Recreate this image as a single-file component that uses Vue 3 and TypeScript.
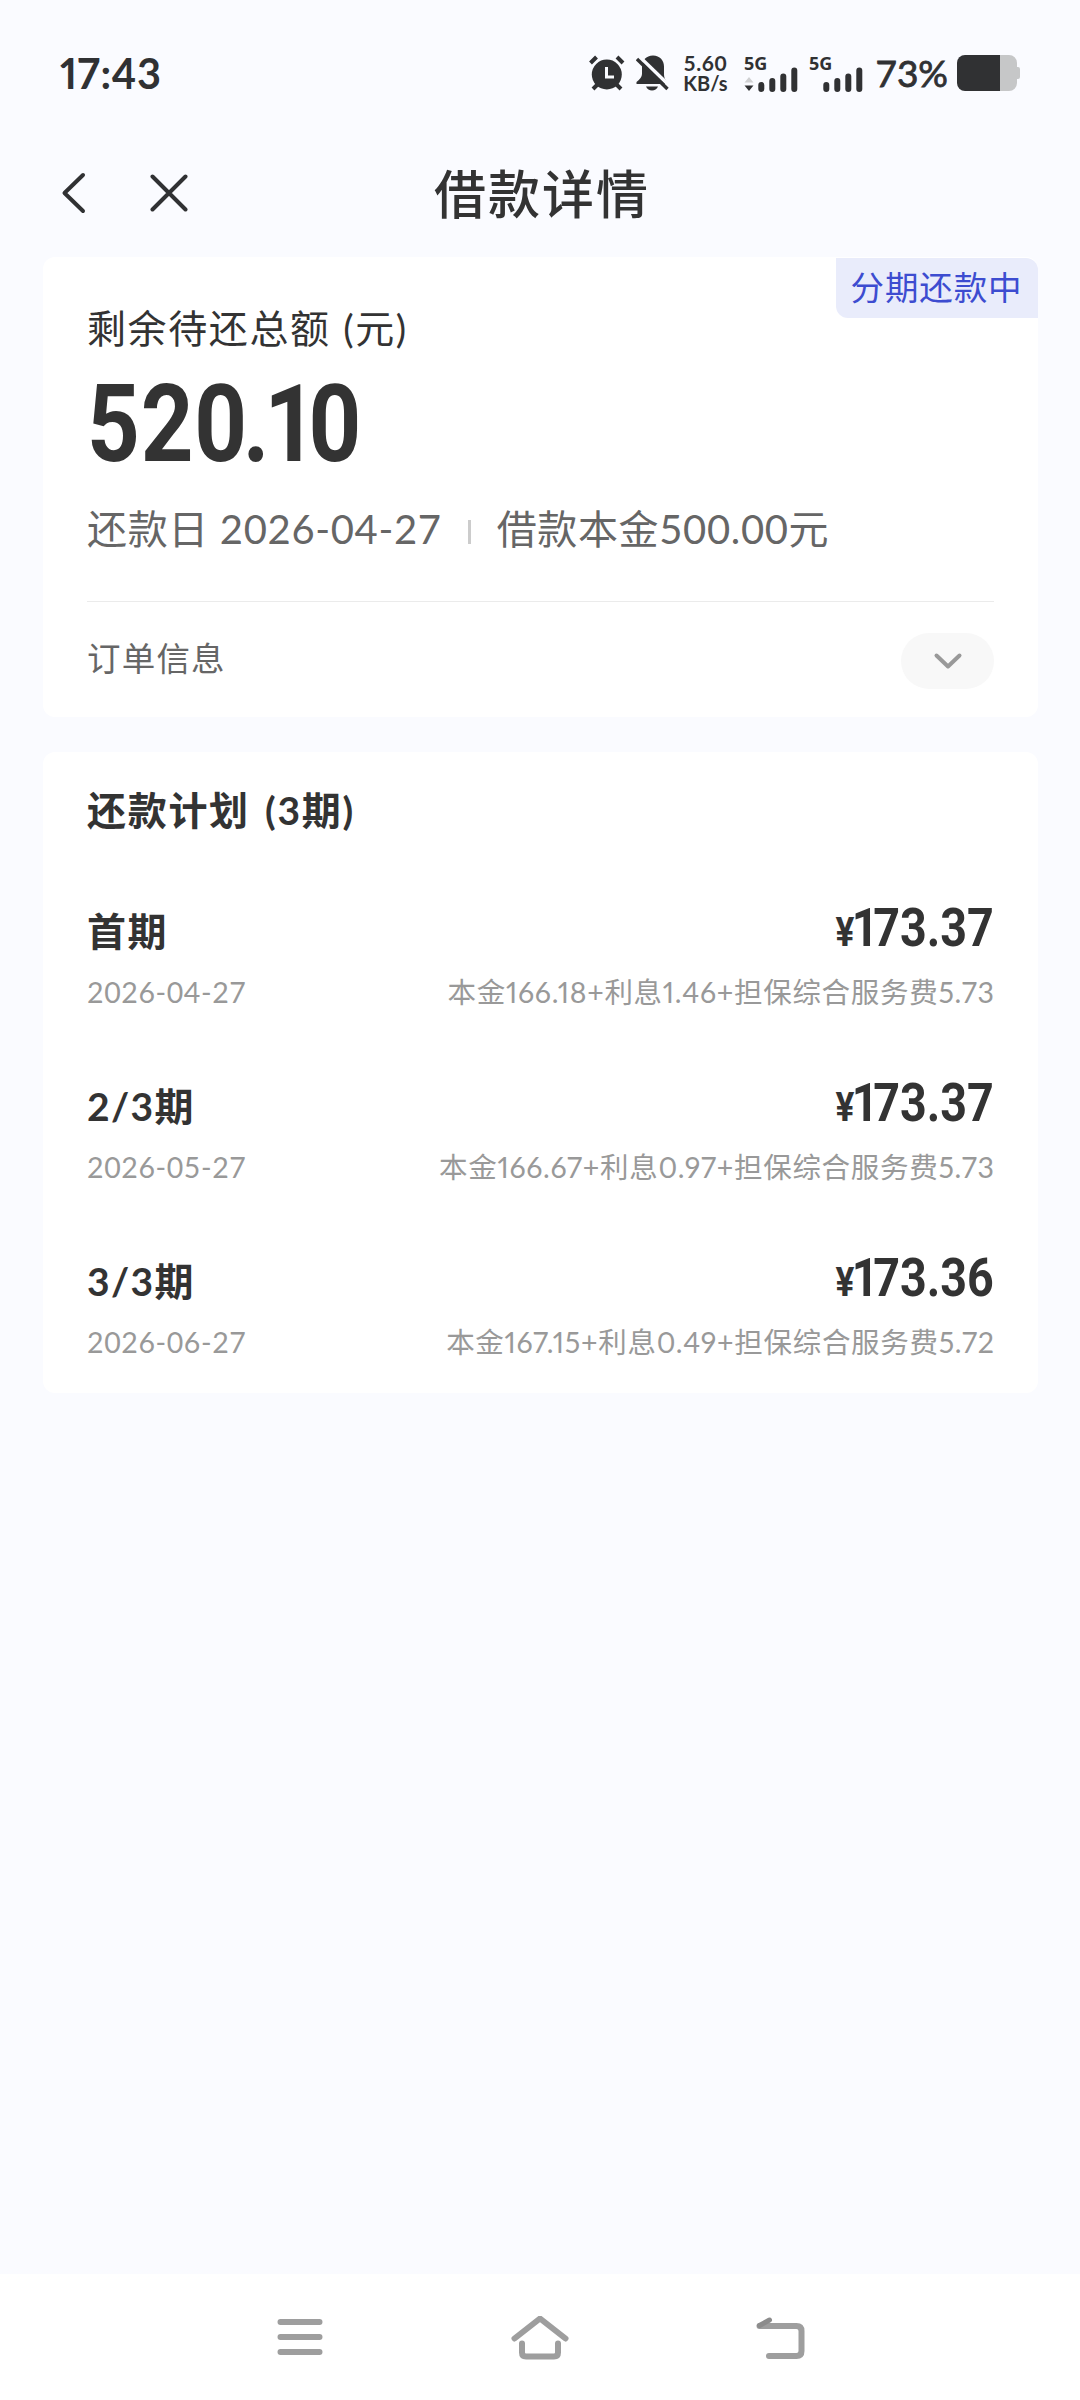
<script setup lang="ts">
interface Installment {
  name: string
  date: string
  amount: string
  detail: string
}

const installments: Installment[] = [
  { name: '首期', date: '2026-04-27', amount: '173.37', detail: '本金166.18+利息1.46+担保综合服务费5.73' },
  { name: '2/3期', date: '2026-05-27', amount: '173.37', detail: '本金166.67+利息0.97+担保综合服务费5.73' },
  { name: '3/3期', date: '2026-06-27', amount: '173.36', detail: '本金167.15+利息0.49+担保综合服务费5.72' },
]
</script>

<template>
  <div class="screen">
    <header class="status">
      <span class="time">17:43</span>
      <div class="status-right">
        <svg width="36" height="38" viewBox="0 0 36 38">
          <path d="M1.500 9 7.500 3M34 9 28 3M9 30 4 35M27 30 32 35" fill="none" stroke="#303133" stroke-width="4" />
          <circle cx="17.800" cy="20.500" r="15" fill="#303133" />
          <path d="M17.500 13v10h7.500" fill="none" stroke="#fafbff" stroke-width="3" />
        </svg>
        <svg class="bell" width="34" height="38" viewBox="0 0 34 38">
          <path d="M17 1.500c7 0 11 5 11 11v8c0 3 1 5 3 7.500v2H.500V28C4 25 6 23 6 20v-7.500c0-6 4-11 11-11z" fill="#303133" />
          <path d="M10 32.500h12c-1 2.700-3.500 4-6 4s-5-1.300-6-4z" fill="#303133" />
          <path d="M3 2.200 35 33.200" stroke="#fafbff" stroke-width="3.500" />
          <path d="M1 5 31.500 35" stroke="#303133" stroke-width="3.400" />
        </svg>
        <div class="speed"><span class="rate">5.60</span><span>KB/s</span></div>
        <svg class="sig" width="55" height="50" viewBox="0 -6 55 50">
          <text x="0" y="16" class="g5">5G</text>
          <path d="M.500 28.500 5 23l4.500 5.500z" fill="#cfd0d2" />
          <path d="M.500 31.500 5 37l4.500-5.500z" fill="#303133" />
          <path d="M17.300 31v4M28.300 27v8M39.300 22.500v12.500M50.300 16.500v18.500" stroke="#303133" stroke-width="6" stroke-linecap="round" />
        </svg>
        <svg class="sig2" width="55" height="50" viewBox="0 -6 55 50">
          <text x="0" y="16" class="g5">5G</text>
          <path d="M17.300 31v4M28.300 27v8M39.300 22.500v12.500M50.300 16.500v18.500" stroke="#303133" stroke-width="6" stroke-linecap="round" />
        </svg>
        <span class="pct">73%</span>
        <svg class="battery" width="63" height="36" viewBox="0 0 63 36">
          <path d="M43 0h9a8 8 0 0 1 8 8v4h1a2 2 0 0 1 2 2v8a2 2 0 0 1-2 2h-1v4a8 8 0 0 1-8 8h-9z" fill="#c6c7c8" />
          <path d="M8 0h35v36H8a8 8 0 0 1-8-8V8a8 8 0 0 1 8-8z" fill="#303133" />
        </svg>
      </div>
    </header>

    <nav class="navbar">
      <div class="nav-side">
        <svg width="26" height="42" viewBox="0 0 26 42"><path d="M23 3 4.500 21 23 39" fill="none" stroke="#303133" stroke-width="4" stroke-linecap="round" stroke-linejoin="round" /></svg>
        <svg class="close" width="38" height="38" viewBox="0 0 38 38"><path d="M2.500 2.500 35.500 35.500M35.500 2.500 2.500 35.500" fill="none" stroke="#303133" stroke-width="4" stroke-linecap="round" /></svg>
      </div>
      <h1 class="title">借款详情</h1>
      <div class="nav-side"></div>
    </nav>

    <section class="card summary">
      <span class="badge">分期还款中</span>
      <div class="label">剩余待还总额 (元)</div>
      <div class="total">52<i class="k5">0</i><i class="k6">.</i><i class="k10">1</i>0</div>
      <div class="meta">
        <span>还款日 2026-04-27</span>
        <i class="sep"></i>
        <span>借款本金500.00元</span>
      </div>
      <div class="order">
        <span class="order-text">订单信息</span>
        <span class="pill">
          <svg width="30" height="18" viewBox="0 0 30 18"><path d="M3.500 3.500 15 14.500 26.500 3.500" fill="none" stroke="#999" stroke-width="4" stroke-linecap="round" stroke-linejoin="round" /></svg>
        </span>
      </div>
    </section>

    <section class="card plan">
      <h2 class="plan-title">还款计划 (3期)</h2>
      <div v-for="item in installments" :key="item.date" class="row">
        <div class="line top">
          <span class="name">{{ item.name }}</span>
          <span class="amount"><i class="yen">¥</i><i class="lead">{{ item.amount.slice(0, 1) }}</i>{{ item.amount.slice(1) }}</span>
        </div>
        <div class="line sub">
          <span class="date">{{ item.date }}</span>
          <span class="detail">{{ item.detail }}</span>
        </div>
      </div>
    </section>

    <footer class="sysnav">
      <svg width="46" height="44" viewBox="0 0 46 44"><path d="M3.500 6h39M3.500 21h39M3.500 36h39" stroke="#9e9e9e" stroke-width="6" stroke-linecap="round" /></svg>
      <svg width="58" height="44" viewBox="0 0 58 44"><path d="M3.500 22.500 29 2.500 54.500 22.500M11 27.500v9q0 4 4 4h28q4 0 4-4v-9" fill="none" stroke="#9e9e9e" stroke-width="6" stroke-linecap="round" stroke-linejoin="round" /></svg>
      <svg width="50" height="44" viewBox="0 0 50 44">
        <path d="M3.500 10h37q5 0 5 5v20q0 5-5 5H13" fill="none" stroke="#9e9e9e" stroke-width="6" stroke-linecap="round" />
        <path d="M3.500 9.500 13.500 4" stroke="#8c8c8c" stroke-width="5" stroke-linecap="round" />
      </svg>
    </footer>
  </div>
</template>

<style>
body { margin: 0; background: #fafbff; }
</style>

<style scoped>
.screen { display: flex; flex-direction: column; width: 1080px; height: 2400px; background: #fafbff; color: #333; font-family: Lato, "Noto Sans CJK SC", sans-serif; overflow: hidden; }
i { font-style: normal; }
svg { display: block; flex: none; }

.status { display: flex; justify-content: space-between; align-items: center; height: 146px; padding: 0 60px; color: #303133; flex: none; }
.time { font-size: 41.500px; font-weight: 700; line-height: 50px; letter-spacing: 0.500px; font-variant-numeric: proportional-nums; }
.status-right { display: flex; align-items: center; }
.bell { margin-left: 11px; }
.speed { display: flex; flex-direction: column; align-items: center; width: 46px; margin-left: 12px; font-size: 20px; font-weight: 700; line-height: 21px; }
.rate { font-size: 21px; letter-spacing: 0.600px; }
.sig { margin-left: 16px; }
.sig2 { margin-left: 10px; }
.g5 { font: 700 18px "Noto Sans", sans-serif; fill: #303133; }
.pct { margin-left: 11px; font-size: 37px; line-height: 44px; -webkit-text-stroke: 0.800px #303133; }
.battery { margin-left: 9px; }

.navbar { display: flex; align-items: center; height: 94px; margin-bottom: 17px; flex: none; }
.nav-side { display: flex; align-items: center; flex: 1; padding-left: 60px; }
.close { margin-left: 64px; }
.title { margin: 0; padding: 2px 0 0 4px; font-size: 52px; line-height: 60px; font-weight: 500; letter-spacing: 2px; }

.card { position: relative; box-sizing: border-box; margin: 0 42.500px; padding: 0 43.500px 0 44.500px; background: #fff; border-radius: 12px; flex: none; }
.summary { height: 460px; padding-top: 41px; }
.badge { position: absolute; top: 1px; right: 0; box-sizing: border-box; width: 202px; height: 60px; padding-left: 15px; border-radius: 0 12px 0 12px; background: #e9ecfb; color: #3d4cd0; font-size: 33.500px; line-height: 58px; letter-spacing: 0.900px; white-space: nowrap; }
.label { font-size: 39px; line-height: 60px; letter-spacing: 1.600px; word-spacing: 1px; }
.total { margin-top: 11.500px; font-family: Roboto, sans-serif; font-size: 107px; line-height: 110px; font-weight: 700; letter-spacing: 1px; transform: scaleX(0.86); transform-origin: 0 50%; }
.k5 { letter-spacing: -5px; }
.k6 { letter-spacing: -6px; }
.k10 { letter-spacing: -10px; }
.meta { display: flex; align-items: center; margin-top: 19.500px; font-size: 40px; line-height: 60px; letter-spacing: 0.650px; color: #666; }
.sep { width: 3px; height: 24px; margin: 6px 25.500px 0 26.500px; background: #ccc; }
.order { display: flex; align-items: center; justify-content: space-between; height: 115px; margin-top: 42px; border-top: 1px solid #ebebeb; }
.order-text { margin-top: -4px; font-size: 33.500px; line-height: 40px; letter-spacing: 1.200px; color: #666; }
.pill { display: flex; align-items: center; justify-content: center; width: 93px; height: 56px; margin-top: 2px; border-radius: 28px; background: #f8f8f8; }

.plan { height: 641px; margin-top: 35px; padding-top: 28px; }
.plan-title { margin: 0 0 61px; font-size: 39px; line-height: 60px; font-weight: 700; letter-spacing: 1.700px; word-spacing: 4px; }
.row { height: 175px; }
.line { display: flex; justify-content: space-between; }
.top { height: 60px; }
.name { font-size: 39px; line-height: 60px; font-weight: 700; letter-spacing: 1.400px; }
.amount { margin-top: -3px; font-family: Roboto, sans-serif; font-size: 53px; line-height: 60px; font-weight: 700; transform: scaleX(0.88); transform-origin: 100% 50%; }
.yen { font-size: 40px; line-height: 1; letter-spacing: -3px; }
.lead { letter-spacing: -6px; }
.sub { margin-top: 10.500px; font-size: 28.500px; line-height: 40px; color: #999; }
.date { letter-spacing: 0.600px; }
.detail { letter-spacing: 0.700px; margin-right: -0.700px; font-variant-numeric: proportional-nums; }

.sysnav { display: flex; align-items: flex-start; justify-content: space-between; box-sizing: border-box; height: 126px; margin-top: auto; padding: 42px 274px 0 277px; background: #fff; flex: none; }
</style>
